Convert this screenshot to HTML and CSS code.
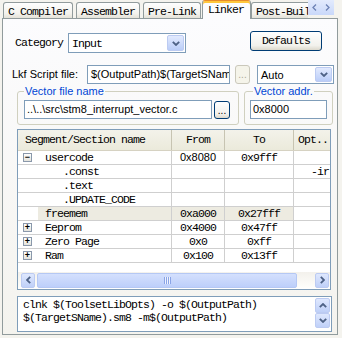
FILE: index.html
```html
<!DOCTYPE html>
<html lang="en">
<head>
    <meta charset="UTF-8">
    <meta name="viewport" content="width=device-width, initial-scale=1.0">
    <title>Linker Options</title>
    <link rel="stylesheet" href="styles.css">
</head>
<body>
    <div class="tab-strip">
        <div class="tabs">
            <div class="tab mono gap3">C Compiler</div>
            <div class="tab mono gap3">Assembler</div>
            <div class="tab mono gap1">Pre-Link</div>
            <div class="tab mono active">Linker</div>
            <div class="tab mono">Post-Build</div>
        </div>
        <div class="spin">
            <span class="spin-btn"><svg width="5" height="7" viewBox="0 0 5 7"><polyline points="4,0.5 1,3.5 4,6.5" fill="none" stroke="#6d82b4" stroke-width="1.3"/></svg></span>
            <span class="spin-btn"><svg width="5" height="7" viewBox="0 0 5 7"><polyline points="1,0.5 4,3.5 1,6.5" fill="none" stroke="#6d82b4" stroke-width="1.3"/></svg></span>
        </div>
    </div>

    <div class="page">
        <div class="row row-category">
            <span class="label mono">Category</span>
            <div class="combo combo-category">
                <span class="combo-text mono">Input</span>
                <span class="combo-btn"><svg width="8" height="5" viewBox="0 0 8 5"><polyline points="0.8,0.8 4,4 7.2,0.8" fill="none" stroke="#4d6185" stroke-width="1.8"/></svg></span>
            </div>
            <button class="button defaults mono">Defaults</button>
        </div>

        <div class="row row-lkf">
            <span class="label sans">Lkf Script file:</span>
            <div class="textbox lkf-input sans">$(OutputPath)$(TargetSName).lkf</div>
            <button class="button dots disabled">...</button>
            <div class="combo combo-auto">
                <span class="combo-text sans">Auto</span>
                <span class="combo-btn"><svg width="8" height="5" viewBox="0 0 8 5"><polyline points="0.8,0.8 4,4 7.2,0.8" fill="none" stroke="#4d6185" stroke-width="1.8"/></svg></span>
            </div>
        </div>

        <div class="row row-vector">
            <fieldset class="group group-file">
                <legend>Vector file name</legend>
                <div class="group-body">
                    <div class="textbox file-input sans">..\..\src\stm8_interrupt_vector.c</div>
                    <button class="button dots">...</button>
                </div>
            </fieldset>
            <fieldset class="group group-addr">
                <legend>Vector addr.</legend>
                <div class="group-body">
                    <div class="textbox addr-input sans">0x8000</div>
                </div>
            </fieldset>
        </div>

        <div class="list">
            <div class="list-head mono">
                <div class="head-cell name">Segment/Section name</div>
                <div class="head-cell center">From</div>
                <div class="head-cell center">To</div>
                <div class="head-cell opt">Opt..</div>
            </div>

            <div class="list-row mono">
                <div class="cell name"><span class="toggle">&minus;</span><span class="item">usercode</span></div>
                <div class="cell center sans">0x8080</div>
                <div class="cell center">0x9fff</div>
                <div class="cell opt"></div>
            </div>
            <div class="list-row mono">
                <div class="cell name"><span class="toggle none"></span><span class="item child">.const</span></div>
                <div class="cell center"></div>
                <div class="cell center"></div>
                <div class="cell opt right">-ir</div>
            </div>
            <div class="list-row mono">
                <div class="cell name"><span class="toggle none"></span><span class="item child">.text</span></div>
                <div class="cell center"></div>
                <div class="cell center"></div>
                <div class="cell opt"></div>
            </div>
            <div class="list-row mono">
                <div class="cell name"><span class="toggle none"></span><span class="item child">.UPDATE_CODE</span></div>
                <div class="cell center"></div>
                <div class="cell center"></div>
                <div class="cell opt"></div>
            </div>
            <div class="list-row mono selected">
                <div class="cell name"><span class="toggle none"></span><span class="item">freemem</span></div>
                <div class="cell center">0xa000</div>
                <div class="cell center">0x27fff</div>
                <div class="cell opt"></div>
            </div>
            <div class="list-row mono">
                <div class="cell name"><span class="toggle">+</span><span class="item">Eeprom</span></div>
                <div class="cell center">0x4000</div>
                <div class="cell center">0x47ff</div>
                <div class="cell opt"></div>
            </div>
            <div class="list-row mono">
                <div class="cell name"><span class="toggle">+</span><span class="item">Zero Page</span></div>
                <div class="cell center">0x0</div>
                <div class="cell center">0xff</div>
                <div class="cell opt"></div>
            </div>
            <div class="list-row mono">
                <div class="cell name"><span class="toggle">+</span><span class="item">Ram</span></div>
                <div class="cell center">0x100</div>
                <div class="cell center">0x13ff</div>
                <div class="cell opt"></div>
            </div>

            <div class="list-fill"></div>

            <div class="hscroll">
                <span class="scroll-btn"><svg width="5" height="8" viewBox="0 0 5 8"><polyline points="4.2,0.8 1,4 4.2,7.2" fill="none" stroke="#4d6185" stroke-width="1.8"/></svg></span>
                <span class="thumb"><span class="grip"></span></span>
                <span class="track"></span>
                <span class="scroll-btn"><svg width="5" height="8" viewBox="0 0 5 8"><polyline points="0.8,0.8 4,4 0.8,7.2" fill="none" stroke="#4d6185" stroke-width="1.8"/></svg></span>
            </div>
        </div>

        <div class="output">
            <div class="output-text mono">clnk $(ToolsetLibOpts) -o $(OutputPath)<br>$(TargetSName).sm8 -m$(OutputPath)</div>
            <div class="vscroll">
                <span class="scroll-btn"><svg width="8" height="5" viewBox="0 0 8 5"><polyline points="0.8,4.2 4,1 7.2,4.2" fill="none" stroke="#4d6185" stroke-width="1.8"/></svg></span>
                <span class="scroll-btn"><svg width="8" height="5" viewBox="0 0 8 5"><polyline points="0.8,0.8 4,4 7.2,0.8" fill="none" stroke="#4d6185" stroke-width="1.8"/></svg></span>
            </div>
        </div>
    </div>
</body>
</html>
```

FILE: styles.css
```css
* {
    box-sizing: border-box;
}
body {
    margin: 0;
    width: 342px;
    height: 338px;
    overflow: hidden;
    background-color: #f4f3ee;
    font-family: "Liberation Sans", Arial, sans-serif;
    font-size: 11px;
    color: #000;
}
.mono {
    font-family: "Liberation Mono", "Courier New", monospace;
    font-size: 11.5px;
    letter-spacing: -0.9px;
}
.sans {
    font-family: "Liberation Sans", Arial, sans-serif;
    font-size: 11px;
    letter-spacing: 0;
}

/* tab strip */
.tab-strip {
    display: flex;
    height: 19px;
    margin-bottom: -1px;
    padding-left: 3px;
    position: relative;
    z-index: 1;
}
.tabs {
    display: flex;
    align-items: flex-end;
    width: 305px;
    overflow: hidden;
}
.tab {
    flex-shrink: 0;
    height: 16px;
    margin-bottom: 1px;
    padding: 1px 4px 0;
    border: 1px solid #919b9c;
    border-bottom: none;
    border-radius: 3px 3px 0 0;
    background: linear-gradient(#fefefe, #f3f2ed 70%, #e4e2d8);
    line-height: 15px;
    white-space: nowrap;
}
.gap3 {
    margin-right: 3px;
}
.gap1 {
    margin-right: 1px;
}
.tab.active {
    height: 19px;
    margin-bottom: 0;
    padding: 1px 6px 0 5px;
    border-top-color: #e68b2c;
    background: #fcfcfe;
    box-shadow: inset 0 2px 0 #ffc73c;
}
.spin {
    display: flex;
    height: 15px;
}
.spin-btn {
    display: flex;
    align-items: center;
    justify-content: center;
    width: 13px;
    height: 15px;
    background: linear-gradient(#e3ebfd, #c9d8fa);
}

/* tab page */
.page {
    display: flex;
    flex-direction: column;
    margin-left: 2px;
    width: 336px;
    height: 317px;
    border: 1px solid #919b9c;
    background: linear-gradient(#fcfcfe, #f4f3ee);
}
.row {
    display: flex;
    align-items: flex-start;
}
.label {
    white-space: nowrap;
}
.row-category {
    margin-top: 12px;
    height: 22px;
    padding-left: 12px;
}
.row-category .label {
    width: 53px;
    margin-top: 2px;
    line-height: 19px;
}
.row-lkf {
    margin-top: 12px;
    height: 19px;
    padding-left: 9px;
}
.row-lkf .label {
    width: 75px;
    line-height: 19px;
}

.textbox {
    height: 19px;
    border: 1px solid #7f9db9;
    background-color: #fff;
    line-height: 17px;
    white-space: nowrap;
    overflow: hidden;
}
.combo {
    display: flex;
    align-items: center;
    border: 1px solid #7f9db9;
    background-color: #fff;
}
.combo-text {
    flex: 1;
    padding-left: 3px;
    white-space: nowrap;
}
.combo-btn {
    display: flex;
    align-items: center;
    justify-content: center;
    width: 17px;
    height: calc(100% - 2px);
    margin-right: 1px;
    border: 1px solid #bccbf2;
    border-radius: 2px;
    background: linear-gradient(#e2eafe, #bacdf8);
}
.combo-category {
    width: 118px;
    height: 20px;
    margin-top: 2px;
}
.combo-auto {
    width: 77px;
    height: 19px;
    margin-left: 7px;
}
.lkf-input {
    width: 143px;
    padding-left: 3px;
}

.button {
    margin: 0;
    padding: 0;
    border: 1px solid #003c74;
    border-radius: 3px;
    background: linear-gradient(#ffffff, #f2f1ec 75%, #dcd8cc);
    color: #000;
    line-height: 16px;
}
.defaults {
    width: 72px;
    height: 20px;
    margin-left: 64px;
}
.dots {
    width: 16px;
    height: 18px;
    font-family: "Liberation Sans", Arial, sans-serif;
    font-size: 10px;
    line-height: 18px;
}
.row-lkf .dots {
    width: 15px;
    height: 19px;
    margin-left: 5px;
}
.dots.disabled {
    border-color: #cac8bb;
    background: #f5f4ea;
    color: #aca899;
}

/* group boxes */
.row-vector {
    margin-top: 1px;
    padding-left: 14px;
    gap: 5px;
}
.group {
    margin: 0;
    min-width: 0;
    border: 1px solid #d0d0bf;
    border-radius: 3px;
}
.group legend {
    padding: 0 1px;
    line-height: 13px;
    color: #0046d5;
    font-family: "Liberation Sans", Arial, sans-serif;
    font-size: 11px;
}
.group-body {
    display: flex;
    gap: 2px;
}
.group-file {
    width: 222px;
    padding: 2px 7px 5px 6px;
}
.file-input {
    width: 188px;
    padding-left: 2px;
}
.group-file .dots {
    margin-top: 1px;
}
.group-addr {
    width: 89px;
    padding: 2px 5px 5px 5px;
}
.group-addr legend {
    margin-left: 3px;
}
.addr-input {
    width: 77px;
    padding-left: 2px;
}

/* list view */
.list {
    display: flex;
    flex-direction: column;
    margin-top: 4px;
    margin-left: 14px;
    width: 314px;
    height: 161px;
    border: 1px solid #7f9db9;
    background-color: #fff;
    overflow: hidden;
}
.list-head,
.list-row {
    display: grid;
    grid-template-columns: 154px 53px 69px 36px;
    flex-shrink: 0;
}
.list-head {
    height: 21px;
    border-bottom: 1px solid #d6d2c2;
    background: linear-gradient(#f3f2ea, #ebeadb);
}
.head-cell {
    line-height: 20px;
    border-right: 1px solid #c7c4b2;
    white-space: nowrap;
    overflow: hidden;
}
.head-cell.name {
    padding-left: 7px;
}
.head-cell.opt {
    padding-left: 4px;
    border-right: none;
}
.center {
    text-align: center;
}
.list-row {
    height: 14px;
    border-bottom: 1px solid #cfcfcf;
}
.cell {
    line-height: 13px;
    border-right: 1px solid #cfcfcf;
    white-space: nowrap;
    overflow: hidden;
}
.cell.opt {
    border-right: none;
}
.cell.right {
    text-align: right;
    padding-right: 1px;
}
.cell.name {
    display: flex;
    align-items: center;
}
.toggle {
    display: flex;
    align-items: center;
    justify-content: center;
    width: 9px;
    height: 9px;
    margin-left: 5px;
    border: 1px solid #8a98ab;
    background: linear-gradient(#ffffff, #e4e3dc);
    font-family: "Liberation Sans", Arial, sans-serif;
    font-size: 9px;
    font-weight: bold;
    letter-spacing: 0;
    line-height: 7px;
}
.toggle.none {
    visibility: hidden;
}
.item {
    flex: 1;
    align-self: stretch;
    margin-left: 6px;
    padding-left: 7px;
}
.item.child {
    padding-left: 25px;
}
.selected .item,
.selected .center {
    background-color: #edebe1;
}
.list-fill {
    flex: 1;
}

/* scroll bars */
.hscroll {
    display: flex;
    align-items: center;
    flex-shrink: 0;
    height: 16px;
    margin-bottom: 1px;
    padding: 0 1px 0 3px;
    background: linear-gradient(#f3f1ec, #fefefb);
}
.scroll-btn {
    display: flex;
    align-items: center;
    justify-content: center;
    width: 14px;
    height: 15px;
    border: 1px solid #bccbf2;
    border-radius: 2px;
    background: linear-gradient(#dfe8fe, #bfd0f8);
}
.thumb {
    display: flex;
    align-items: center;
    justify-content: center;
    width: 260px;
    height: 15px;
    margin-left: 2px;
    border: 1px solid #b5c8f4;
    border-radius: 2px;
    background: linear-gradient(#d4e0fd, #bdcffa);
}
.grip {
    width: 7px;
    height: 7px;
    background: repeating-linear-gradient(to right, #8aa4e6 0 1px, #eef3fe 1px 2px);
}
.track {
    flex: 1;
}

/* output box */
.output {
    display: flex;
    margin-top: 6px;
    margin-left: 14px;
    width: 315px;
    height: 36px;
    border: 1px solid #7f9db9;
    background-color: #fff;
}
.output-text {
    flex: 1;
    padding: 1px 0 0 5px;
    line-height: 13px;
    white-space: nowrap;
    overflow: hidden;
}
.vscroll {
    display: flex;
    flex-direction: column;
    padding: 1px 1px 0 0;
}
.vscroll .scroll-btn {
    width: 15px;
    height: 15px;
}
```
